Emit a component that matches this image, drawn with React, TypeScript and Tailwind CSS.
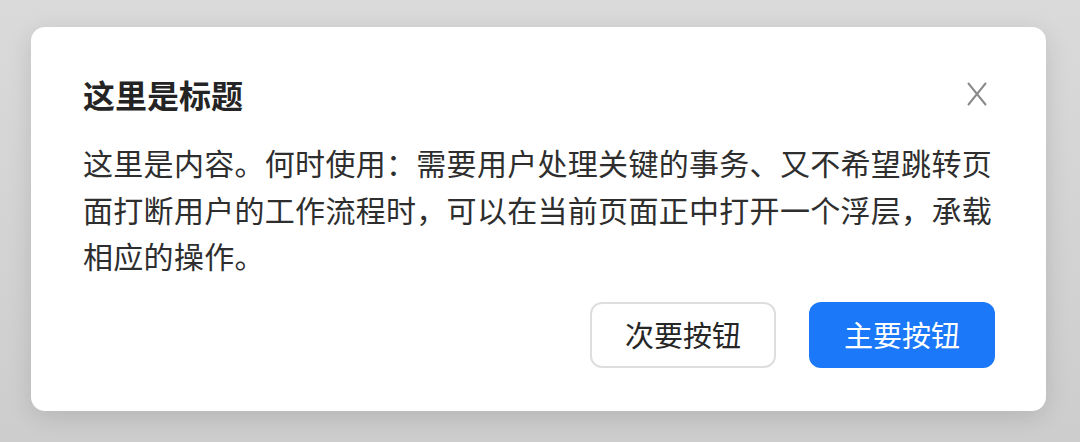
const font = {
  fontFamily: '"Noto Sans CJK SC", "Noto Sans", sans-serif',
};

const CloseIcon = () => (
  <svg width="20" height="24" viewBox="0 0 20 24" fill="none">
    <path
      d="M1.5 1.5L18.5 22.5M18.5 1.5L1.5 22.5"
      stroke="#8a8a8a"
      strokeWidth="2"
      strokeLinecap="round"
    />
  </svg>
);

export default function App() {
  return (
    <div
      className="h-[442px] w-[1080px] bg-gradient-to-b from-[#dadada] to-[#cdcdcd] pl-[31px] pt-[27px]"
      style={font}
    >
      <div className="flex h-[384px] w-[1015px] flex-col rounded-[14px] bg-white px-[51px] pb-[43px] pl-[52px] pt-[51px] shadow-[0_6px_24px_rgba(0,0,0,0.12)]">
        <div className="flex items-center justify-between">
          <h1 className="text-[32px] font-bold leading-[32px] text-[#242424]">
            这里是标题
          </h1>
          <button className="mr-[8px] flex items-center justify-center">
            <CloseIcon />
          </button>
        </div>
        <p className="mt-[29px] text-[30px] leading-[46.5px] tracking-[0.3px] text-[#2e2e2e]">
          这里是内容。何时使用：需要用户处理关键的事务、又不希望跳转页面打断用户的工作流程时，可以在当前页面正中打开一个浮层，承载相应的操作。
        </p>
        <div className="mt-auto flex justify-end gap-[33px]">
          <button className="flex h-[66px] w-[186px] items-center justify-center rounded-[12px] border-2 border-[#dedede] bg-white text-[29px] text-[#262626]">
            次要按钮
          </button>
          <button className="flex h-[66px] w-[186px] items-center justify-center rounded-[12px] bg-[#1b78f8] text-[29px] text-white">
            主要按钮
          </button>
        </div>
      </div>
    </div>
  );
}
